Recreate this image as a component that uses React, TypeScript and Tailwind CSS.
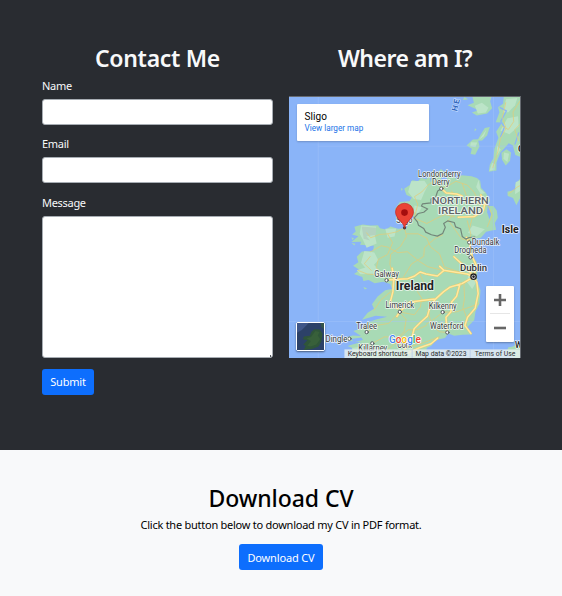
import React from "react";

const land = "#a8dab5";
const pale = "#bce4c8";
const sea = "#8ab4f8";

type LabelProps = {
  x: number;
  y: number;
  w: number;
  size?: number;
  weight?: number;
  fill?: string;
  children: string;
};

function Label({ x, y, w, size = 25, weight = 450, fill = "#33373a", children }: LabelProps) {
  return (
    <text
      x={x}
      y={y}
      textLength={w}
      lengthAdjust="spacingAndGlyphs"
      fontSize={size}
      fontWeight={weight}
      fill={fill}
      stroke="#ffffff"
      strokeOpacity={0.8}
      strokeWidth={5}
      strokeLinejoin="round"
      paintOrder="stroke"
    >
      {children}
    </text>
  );
}

const towns = [
  [471, 294], [306, 570], [346, 665], [475, 666], [246, 726],
  [489, 727], [555, 456], [559, 501], [263, 760], [194, 746],
];

const motorways = [
  "M315 568 L370 565 L389 558 L407 545 L425 551 L459 557 L479 540 L515 546 L549 551 L568 560",
  "M568 560 L533 580 L496 591 L478 604 L454 626 L412 631 L375 636 L346 665 L337 679",
  "M323 534 L328 563 L325 605 L316 640 L340 655",
  "M527 581 L517 618 L502 635 L500 665 L485 681 L488 721",
  "M454 626 L438 646 L429 678 L407 698 L389 716 L381 748 L361 777",
  "M568 560 L578 576 L582 610 L573 654 L550 681 L542 706 L560 730",
  "M568 556 L578 530 L563 496 L556 457 L547 441 M568 556 L534 522 L509 499 M479 540 L466 528",
  "M471 294 L486 307 L517 310 L533 316 M522 380 L570 378 L598 358 L602 340 L590 313",
  "M368 790 L405 773 L440 761 L460 744",
].join(" ");

function MapCanvas() {
  return (
    <svg
      className="block h-full w-full"
      viewBox="12 18 696 786"
      preserveAspectRatio="none"
      fontFamily="Roboto, sans-serif"
      strokeLinejoin="round"
      strokeLinecap="round"
    >
      <rect x="12" y="18" width="696" height="786" fill={sea} />

      {/* Ireland */}
      <path
        fill={land}
        d="M470 235 L482 246 L505 254 L515 264 L532 254 L562 257 L578 262 L588 270 L591 292 L605 306 L618 330 L608 346 L628 346 L638 360 L641 382 L632 398 L636 418 L622 420 L606 424 L590 442 L572 445 L557 455 L564 478 L567 503 L578 515 L580 545 L577 570 L589 600 L586 640 L574 664 L570 690 L548 712 L562 733 L535 734 L510 737 L492 730 L482 744 L455 750 L440 768 L428 773 L421 790 L404 804 L196 804 L205 790 L245 774 L208 776 L188 768 L230 756 L187 752 L181 743 L204 736 L229 738 L206 723 L234 714 L248 697 L274 688 L308 680 L273 677 L232 689 L249 668 L268 656 L262 642 L279 619 L302 600 L322 596 L317 581 L296 574 L270 579 L252 569 L236 572 L233 560 L208 551 L225 539 L205 526 L221 516 L216 499 L232 483 L265 482 L268 466 L226 463 L230 454 L200 455 L221 437 L202 432 L213 423 L209 409 L234 402 L258 405 L280 404 L286 413 L304 417 L318 408 L340 415 L366 414 L372 398 L389 381 L379 366 L351 371 L330 357 L346 334 L375 332 L382 320 L366 313 L359 294 L377 282 L383 269 L401 272 L410 261 L426 266 L435 249 L449 255 Z"
      />
      <g fill={sea}>
        <path d="M483 250 L469 265 L476 276 L490 268Z" />
        <path d="M611 340 L621 370 L616 386 L609 365Z" />
        <path d="M198 747 L230 742 L235 750 L208 756Z" />
        <path d="M434 251 L439 274 L443 258Z" />
      </g>
      <g fill={pale}>
        <path d="M380 272 L420 270 L430 285 L420 305 L410 328 L388 325 L371 304Z" />
        <path d="M229 405 L275 408 L270 431 L276 459 L246 472 L235 449 L225 430Z" />
        <path d="M239 482 L269 486 L281 510 L268 523 L279 535 L248 539 L229 517Z" />
        <path d="M216 540 L247 530 L278 537 L269 550 L227 552Z" />
        <path d="M302 415 L335 414 L330 438 L309 442Z" />
        <path d="M390 345 L412 350 L402 369 L388 364Z" />
        <path d="M583 267 L589 295 L603 307 L590 311 L576 289Z" />
        <path d="M565 405 L602 416 L578 437 L551 427Z" />
        <path d="M553 544 L581 567 L564 596 L549 576Z" />
        <path d="M202 774 L254 766 L268 779 L224 804 L206 799Z" />
      </g>
      <path fill="#b4d2c0" d="M231 408 L274 412 L274 433 L245 437 L256 450 L237 445Z" />

      {/* Scottish coast and islands */}
      <g fill={land}>
        <path d="M659 18 L708 18 L708 198 L694 193 L686 163 L674 157 L663 170 L649 185 L637 216 L637 239 L614 243 L617 222 L628 202 L631 173 L643 141 L636 123 L654 95 L635 94 L646 64 L642 49 L657 38Z" />
        <path d="M550 43 L569 35 L565 18 L622 18 L618 31 L624 52 L609 68 L578 74 L563 65 L583 58Z" />
        <path d="M617 108 L609 133 L594 149 L579 150 L590 130 L602 111Z" />
        <path d="M581 145 L586 167 L573 192 L559 190 L563 174 L547 164 L566 146Z" />
        <path d="M667 175 L681 185 L678 210 L665 224 L654 207 L652 186Z" />
        <path d="M708 265 L694 281 L695 297 L670 303 L671 316 L687 322 L697 344 L708 323Z" />
        <path d="M708 759 L684 770 L673 772 L667 786 L692 804 L708 804Z" />
        <path d="M540 18 L552 25 L536 27Z M572 112 L577 116 L571 122Z" />
      </g>
      <g fill={pale}>
        <path d="M666 25 L700 21 L693 43 L673 64 L656 65Z" />
        <path d="M572 44 L593 35 L613 50 L605 65 L581 68Z" />
        <path d="M670 82 L702 76 L704 107 L676 130 L649 119Z" />
        <path d="M607 116 L599 136 L585 146Z M560 154 L579 155 L574 169 L558 166Z" />
        <path d="M660 185 L675 189 L670 214 L658 204Z M639 164 L650 176 L638 195Z" />
        <path d="M624 216 L632 220 L631 238 L616 240Z M695 275 L708 269 L708 301 L693 311Z" />
      </g>
      <g fill="none" stroke={sea} strokeWidth="4">
        <path d="M648 50 L667 60 L650 91 L661 109 L650 137" />
        <path d="M704 126 L693 160" />
      </g>
      <g fill={land}>
        <path d="M349 292 L355 295 L351 301Z M344 337 L350 336 L347 344Z M200 440 L208 444 L203 449Z M236 590 L248 594 L240 598Z M200 458 L212 460 L209 465Z" />
      </g>

      {/* Graticule */}
      <path d="M100 18 V804 M628 18 V804 M100 166 H708 M12 694 H708" stroke="#a5c6fa" strokeWidth="2" opacity="0.65" />

      {/* Secondary roads */}
      <g fill="none" stroke="#e4cd78" strokeWidth="2.4" opacity="0.9">
        <path d="M470 294 L457 268 L432 282 L412 304 L390 318 L400 341 L390 382 L360 412 L337 424 L309 430 L285 432 L258 442 L246 427" />
        <path d="M360 412 L366 438 L348 468 L318 492 L316 522 L324 547 L288 554 L247 551 L220 540" />
        <path d="M258 484 L290 466 L309 470 L340 487 L369 484 L402 511 L430 529 L475 540" />
        <path d="M309 430 L324 457 L309 492 L281 507 L275 532 L306 570" />
        <path d="M366 430 L401 430 L427 443 L438 469 L466 491 L480 530 L547 552" />
        <path d="M388 382 L427 399 L459 382 L482 372 L511 379" />
        <path d="M475 433 L452 444 L420 472 L418 498 L381 521 L357 560" />
        <path d="M493 391 L515 421 L532 445 L556 451 M549 391 L560 431 L555 450" />
        <path d="M471 294 L493 284 L515 272 L549 283 L570 305 L590 347 L565 378 L557 410" />
        <path d="M502 301 L518 330 L515 367 L487 393 M534 278 L545 312 L565 333" />
        <path d="M404 546 L418 577 L399 604 L412 624 L408 650 L390 674 L345 665" />
        <path d="M450 628 L432 665 L441 705 L465 725 L488 727 M475 666 L453 684 L426 702" />
        <path d="M320 603 L289 629 L268 660 M246 726 L280 705 L312 700 L345 666" />
        <path d="M345 666 L365 688 L359 724 L340 743 L300 740 L263 760 L241 785" />
        <path d="M568 560 L539 581 L541 623 L536 653 L550 690 M476 666 L517 665 L583 641" />
        <path d="M482 604 L502 589 L533 584 M426 706 L398 719 L371 719 L345 743" />
        <path d="M300 789 L330 760 L374 771 L421 757 L465 740 M260 540 L239 520 L257 498" />
        <path d="M665 35 L655 79 L666 112 L649 143 L642 180 L626 231" />
        <path d="M708 30 L687 63 L689 92 L673 116 L654 106 M708 100 L692 116 L704 150" />
        <path d="M674 310 L700 289 L708 285 M565 337 L612 345 L624 373 L610 408" />
      </g>
      {/* Motorways */}
      <path d={motorways} fill="none" stroke="#eac962" strokeWidth="6.5" />
      <path d={motorways} fill="none" stroke="#ffe8a0" strokeWidth="4.5" />

      {/* Border */}
      <path
        fill="none"
        stroke="#728579"
        strokeWidth="3.5"
        d="M471 294 L460 301 L454 319 L440 325 L440 337 L414 340 L411 346 L430 355 L418 365 L401 369 L389 382 L399 394 L402 404 L418 414 L424 425 L441 433 L459 437 L475 429 L483 410 L478 399 L490 391 L510 396 L514 409 L529 415 L534 438 L545 446 L555 441 L572 440"
      />

      {/* Settlements */}
      {towns.map(([cx, cy]) => (
        <circle key={`${cx}-${cy}`} cx={cx} cy={cy} r="5" fill="#fff" stroke="#555c60" strokeWidth="3" />
      ))}
      <circle cx="568" cy="559" r="8" fill="#fff" stroke="#202124" strokeWidth="4" />
      <circle cx="568" cy="559" r="4" fill="#202124" />

      <Label x={401} y={260} w={128}>Londonderry</Label>
      <Label x={443} y={282} w={53}>Derry</Label>
      <Label x={442} y={341} w={172} size={28} weight={500} fill="#5f6368">NORTHERN</Label>
      <Label x={461} y={371} w={136} size={28} weight={500} fill="#5f6368">IRELAND</Label>
      <Label x={335} y={398} w={49}>Sligo</Label>
      <Label x={563} y={464} w={83}>Dundalk</Label>
      <Label x={510} y={489} w={97}>Drogheda</Label>
      <Label x={527} y={542} w={82} size={29} weight={500} fill="#303438">Dublin</Label>
      <Label x={269} y={559} w={74}>Galway</Label>
      <Label x={334} y={599} w={115} size={36} weight={700} fill="#202124">Ireland</Label>
      <Label x={303} y={654} w={86}>Limerick</Label>
      <Label x={433} y={655} w={84}>Kilkenny</Label>
      <Label x={215} y={716} w={62}>Tralee</Label>
      <Label x={437} y={717} w={101}>Waterford</Label>
      <Label x={122} y={755} w={66}>Dingle</Label>
      <Label x={221} y={783} w={87}>Killarney</Label>
      <Label x={338} y={774} w={44}>Cork</Label>
      <Label x={653} y={429} w={51} size={31} weight={700} fill="#202124">Isle</Label>
      <Label x={693} y={775} w={22} size={28} weight={500} fill="#202124">W</Label>
      <Label x={702} y={183} w={18} size={26} weight={700} fill="#202124">G</Label>
      <text
        transform="translate(518 62) rotate(-76)"
        fontSize="24"
        fontWeight="700"
        fill="#2f66bd"
        stroke="#c4dcff"
        strokeWidth="4"
        paintOrder="stroke"
        letterSpacing="6"
      >
        HE
      </text>

      {/* Marker */}
      <circle cx="360" cy="412" r="5" fill="#404347" />
      <path
        d="M360 412 C357 393 333 385 333 364 A27 26 0 1 1 387 364 C387 385 363 393 360 412Z"
        fill="#ea4335"
        stroke="#c5221f"
        strokeWidth="2"
      />
      <circle cx="360" cy="366" r="10" fill="#a50e0e" />

      <text x="313" y="760" textLength="96" lengthAdjust="spacingAndGlyphs" fontSize="31" fontWeight="500" stroke="#fff" strokeWidth="4" paintOrder="stroke">
        <tspan fill="#4285f4">G</tspan><tspan fill="#ea4335">o</tspan><tspan fill="#fbbc04">o</tspan><tspan fill="#4285f4">g</tspan><tspan fill="#34a853">l</tspan><tspan fill="#ea4335">e</tspan>
      </text>

      {/* Attribution strip */}
      <rect x="179" y="778" width="529" height="26" fill="#e8efee" opacity="0.82" />
      <path d="M383 778 V804 M558 778 V804" stroke="#bcd0e9" strokeWidth="3" />
      <g fontSize="21.5" fill="#2a2c2e">
        <text x="189" y="798" textLength="180" lengthAdjust="spacingAndGlyphs">Keyboard shortcuts</text>
        <text x="393" y="798" textLength="154" lengthAdjust="spacingAndGlyphs">Map data ©2023</text>
        <text x="572" y="798" textLength="122" lengthAdjust="spacingAndGlyphs">Terms of Use</text>
      </g>
    </svg>
  );
}

function SatelliteThumb() {
  return (
    <svg className="block h-full w-full" viewBox="0 0 78 78">
      <rect width="78" height="78" fill="#2c4168" />
      <path d="M0 0 H34 L14 20 L0 28Z" fill="#3f5688" />
      <path d="M50 18 L66 19 L74 32 L70 54 L62 68 L43 75 L20 78 L25 66 L18 63 L30 50 L17 47 L20 39 L37 37 L42 25Z" fill="#2f5539" />
      <path d="M53 23 L65 26 L60 36 L67 47 L56 62 L39 68 L30 66 L40 52 L28 45 L41 40Z" fill="#38603a" />
      <path d="M68 0 H78 V18 L70 11Z" fill="#34534a" />
    </svg>
  );
}

function Field({ id, label }: { id: string; label: string }) {
  return (
    <div className="mb-[10px] flex flex-col gap-1">
      <label htmlFor={id} className="h-[18px] text-[11px] leading-[18px] tracking-[-0.3px]">{label}</label>
      <input id={id} className="h-[26px] w-full rounded-[3px] border border-[#a7adb3] bg-white px-2 text-black" />
    </div>
  );
}

export default function App() {
  return (
    <main className="flex h-[596px] w-[562px] flex-col overflow-hidden font-['Noto_Sans','Open_Sans',sans-serif] text-[11px]">
      <section className="flex h-[450px] shrink-0 gap-4 bg-[#292c31] pl-[42px] pt-[44px] text-[#f8f9fa]">
        <form className="w-[231px]" onSubmit={(e) => e.preventDefault()}>
          <h2 className="mb-[4px] h-[29px] text-center text-[23px] font-[580] leading-[29px] tracking-[-0.3px]">Contact Me</h2>
          <Field id="name" label="Name" />
          <Field id="email" label="Email" />
          <div className="flex flex-col gap-1 pt-px">
            <label htmlFor="message" className="h-[18px] leading-[18px] tracking-[-0.3px]">Message</label>
            <div className="relative">
              <textarea id="message" className="block h-[142px] w-full resize-none rounded-[3px] border border-[#a7adb3] bg-white p-2 text-black" />
              <span className="absolute bottom-[1px] right-[2px] h-[2px] w-px bg-[#55595d]" />
            </div>
          </div>
          <button className="mt-[11px] h-[26px] w-[52px] rounded-[3px] bg-[#0d6efd] text-[11px] leading-[26px] tracking-[-0.2px] text-white">Submit</button>
        </form>

        <div className="w-[232px]">
          <h2 className="mb-[23px] h-[29px] text-center text-[23px] font-[580] leading-[29px] tracking-[-0.5px]">Where am I?</h2>
          <div className="relative h-[262px] w-[232px] overflow-hidden border-r border-t border-[#666a70] font-['Roboto',sans-serif]">
            <MapCanvas />
            <div className="absolute left-2 top-[7px] h-[37px] w-[132px] rounded-[1px] bg-white px-[7.5px] pt-[6px] shadow-[0_1px_2px_rgba(0,0,0,0.2)]">
              <div className="text-[10px] leading-[13px] tracking-[0.1px] text-black">Sligo</div>
              <a href="#map" className="block whitespace-nowrap text-[8.2px] leading-[11px] text-[#1a73e8]">View larger map</a>
            </div>
            <div className="absolute bottom-[7px] left-[7px] h-[29px] w-[29px] rounded-[2px] border-[1.5px] border-white shadow-[0_1px_2px_rgba(0,0,0,0.5)]">
              <SatelliteThumb />
            </div>
            <div className="absolute bottom-4 right-[6px] flex h-[56px] w-[28px] flex-col items-center rounded-[1px] bg-white shadow-[0_1px_2px_rgba(0,0,0,0.3)]">
              <button aria-label="Zoom in" className="flex h-[27px] w-full items-center justify-center">
                <svg width="12" height="12" viewBox="0 0 12 12"><path d="M6 0V12M0 6H12" stroke="#666" strokeWidth="2.6" /></svg>
              </button>
              <span className="h-px w-5 bg-[#e6e6e6]" />
              <button aria-label="Zoom out" className="flex h-[28px] w-full items-center justify-center">
                <svg width="12" height="12" viewBox="0 0 12 12"><path d="M0 6H12" stroke="#666" strokeWidth="2.6" /></svg>
              </button>
            </div>
          </div>
        </div>
      </section>

      <section className="flex flex-1 flex-col items-center bg-[#f8f9fa] pt-[34px] text-black">
        <h2 className="h-[29px] text-[23px] font-medium leading-[29px] tracking-[-0.05px]">Download CV</h2>
        <p className="mt-[3px] h-[18px] whitespace-nowrap text-[11px] leading-[18px] tracking-[-0.25px]">Click the button below to download my CV in PDF format.</p>
        <button className="mt-[10px] h-[26px] w-[84px] rounded-[3px] bg-[#0d6efd] pt-px text-[11px] leading-[25px] tracking-[-0.15px] text-white">Download CV</button>
      </section>
    </main>
  );
}
